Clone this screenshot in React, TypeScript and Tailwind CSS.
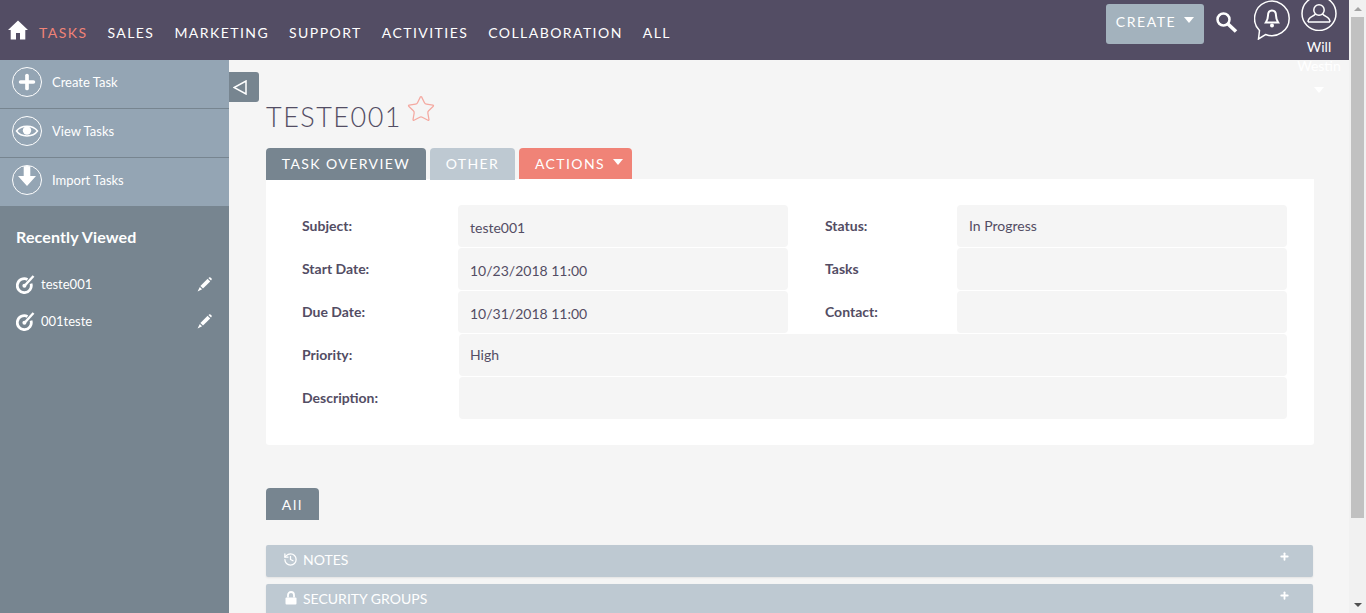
import { History, Plus, Star } from "lucide-react";

const nav = ["SALES", "MARKETING", "SUPPORT", "ACTIVITIES", "COLLABORATION", "ALL"];

const HomeIcon = () => (
  <svg width="20" height="20" viewBox="0 0 20 20" fill="white">
    <path d="M10 0.5 L20 10 L17.3 10 L17.3 19.5 L12 19.5 L12 13 L8 13 L8 19.5 L2.7 19.5 L2.7 10 L0 10 Z" />
  </svg>
);

const Caret = () => (
  <span className="inline-block w-0 h-0 border-l-[5.5px] border-r-[5.5px] border-t-[6px] border-l-transparent border-r-transparent border-t-white" />
);

const Circle = ({ children }: { children: React.ReactNode }) => (
  <span className="w-[30px] h-[30px] rounded-full border-[1.5px] border-white flex items-center justify-center overflow-hidden shrink-0">
    {children}
  </span>
);

const TaskIcon = () => (
  <svg width="19" height="19" viewBox="0 0 19 19" fill="none" stroke="white" className="shrink-0">
    <path d="M11.5 4.4 A7 7 0 1 0 15 8.6" strokeWidth="2.8" />
    <path d="M8.4 11 L17.5 1" strokeWidth="2.4" />
    <circle cx="8.4" cy="10.8" r="2" fill="white" stroke="none" />
  </svg>
);

const PencilIcon = () => (
  <svg width="15" height="15" viewBox="0 0 15 15" fill="white" className="ml-auto">
    <path d="M3.4 9 L10.6 1.8 L13.2 4.4 L6 11.6 Z" />
    <path d="M11.4 1 L12.2 0.4 C12.6 0.1 13 0.1 13.4 0.4 L14.6 1.6 C14.9 2 14.9 2.4 14.6 2.8 L14 3.6 Z" />
    <path d="M2.8 9.9 L5.1 12.2 L0.6 14.4 Z" />
  </svg>
);

const Field = ({
  label,
  value,
  wide,
  right,
  high,
}: {
  label: string;
  value?: string;
  wide?: boolean;
  right?: boolean;
  high?: boolean;
}) => (
  <>
    <div className={right ? "text-[14px] font-bold text-[#534d64] pt-[10px] pl-[37px]" : "text-[14px] font-bold text-[#534d64] pt-[10px]"}>
      {label}
    </div>
    <div
      className={
        wide
          ? "col-span-3 ml-px h-[42px] rounded-[4px] bg-[#f5f5f5] px-[11px] pt-[10px] text-[14px] text-[#534d64]"
          : high
            ? "h-[42px] rounded-[4px] bg-[#f5f5f5] px-[12px] pt-[10px] text-[14px] text-[#534d64]"
            : "h-[42px] rounded-[4px] bg-[#f5f5f5] px-[12px] pt-[12px] text-[14px] text-[#534d64]"
      }
    >
      {value}
    </div>
  </>
);

const SubPanel = ({ icon, title }: { icon: React.ReactNode; title: string }) => (
  <div className="h-[32px] bg-[#bec9d2] rounded-[2px] flex items-center pl-[17px] pr-[23px] pb-[4px] text-white text-[14px] shadow-[0_1px_2px_rgba(0,0,0,0.08)]">
    <span className="w-[15px] flex justify-center mr-[5px]">{icon}</span>
    <span>{title}</span>
    <Plus size={11} strokeWidth={4} className="ml-auto -mt-[6px]" />
  </div>
);

export default function App() {
  return (
    <div className="flex h-[613px] w-full overflow-hidden bg-[#f5f5f5] font-['Lato','Open_Sans',sans-serif]">
      <div className="flex-1 min-w-0 flex flex-col">
        {/* Top bar */}
        <header className="relative h-[60px] shrink-0 bg-[#534d64] flex items-center pl-[8px] pr-[13px] text-white">
          <HomeIcon />
          <nav className="ml-[11px] flex items-center gap-[20px] text-[14px] tracking-[1.44px] mt-[5px]">
            <span className="relative text-[#f08377]">
              TASKS
              <span className="absolute left-0 right-0 top-[-25px] h-[3px] bg-[#f08377]" />
            </span>
            {nav.map((n) => (
              <span key={n}>{n}</span>
            ))}
          </nav>
          <div className="ml-auto flex items-start h-full">
            <button className="mt-[4px] h-[40px] w-[98px] rounded-[3px] bg-[#a3b2bd] flex items-center justify-center gap-[8px] pb-[5px] text-[14px] tracking-[1.55px]">
              CREATE
              <span className="-mt-[4px] flex">
                <Caret />
              </span>
            </button>
            <svg width="22" height="22" viewBox="0 0 22 22" fill="none" stroke="white" className="ml-[12px] mt-[12px]">
              <circle cx="7.5" cy="7.5" r="6" strokeWidth="2.5" />
              <path d="M12 12 L20 19.5" strokeWidth="3.6" />
            </svg>
            <svg width="37" height="40" viewBox="0 0 37 40" fill="none" stroke="white" className="ml-[16px]">
              <path d="M5.5 30.5 A17.3 17.3 0 1 1 11.5 34.5 L4.5 39 Z" strokeWidth="1.5" />
              <path d="M18 10.5 C15 10.5 14 13 14 15.5 C14 19 13 20.5 11.8 22.5 L24.2 22.5 C23 20.5 22 19 22 15.5 C22 13 21 10.5 18 10.5 Z" strokeWidth="2" />
              <circle cx="18" cy="25.5" r="2" fill="white" stroke="none" />
            </svg>
            <div className="relative ml-[10px] w-[35px]">
              <svg width="36" height="36" viewBox="0 0 36 36" fill="none" stroke="white" className="-mt-[5px]">
                <circle cx="18" cy="18.5" r="17" strokeWidth="1.5" />
                <circle cx="18" cy="15" r="5.2" strokeWidth="1.5" />
                <path d="M7 27 C7 22 12 22 14.5 19 M29 27 C29 22 24 22 21.5 19 M7 27 L29 27" strokeWidth="1.5" />
              </svg>
              {/* user menu spills out of the bar */}
              <div className="absolute top-[37px] left-[-7px] w-[50px] text-center text-[14px] leading-[19px]">
                <div>Will</div>
                <div>Westin</div>
                <div className="mt-[12px] flex justify-center">
                  <Caret />
                </div>
              </div>
            </div>
          </div>
        </header>

        <div className="flex-1 min-h-0 flex">
          {/* Sidebar */}
          <aside className="w-[229px] shrink-0 bg-[#778590] text-white">
            {[
              { label: "Create Task", icon: <Plus size={22} strokeWidth={4} /> },
              {
                label: "View Tasks",
                icon: (
                  <svg width="24" height="16" viewBox="0 0 24 16" fill="none" stroke="white">
                    <path d="M1.5 8 C6 1.5 18 1.5 22.5 8 C18 14.5 6 14.5 1.5 8 Z" strokeWidth="1.5" />
                    <circle cx="12" cy="7.5" r="4.2" fill="white" stroke="none" />
                  </svg>
                ),
              },
              {
                label: "Import Tasks",
                icon: (
                  <svg width="20" height="24" viewBox="0 0 20 24" fill="white" className="-mt-[5px]">
                    <path d="M6.7 0 H13.3 V11 H19 L10 21 L1 11 H6.7 Z" />
                  </svg>
                ),
              },
            ].map((it) => (
              <div
                key={it.label}
                className="h-[49px] bg-[#94a5b4] border-b border-[#778590] flex items-center pl-[12px] gap-[10px] text-[13px] pb-[5px]"
              >
                <Circle>{it.icon}</Circle>
                <span className="pt-[2px]">{it.label}</span>
              </div>
            ))}
            <div className="pl-[16px] pr-[17px] pt-[20px]">
              <h3 className="text-[16px] font-bold leading-[19px] tracking-[0.13px]">Recently Viewed</h3>
              <ul className="mt-[20px] text-[13px]">
                {["teste001", "001teste"].map((t) => (
                  <li key={t} className="h-[37px] flex items-center gap-[6px]">
                    <TaskIcon />
                    <span>{t}</span>
                    <PencilIcon />
                  </li>
                ))}
              </ul>
            </div>
          </aside>

          {/* Main content */}
          <main className="relative flex-1 min-w-0 pl-[37px] pr-[35px] overflow-hidden">
            <button className="absolute left-0 top-[12px] w-[30px] h-[30px] bg-[#778590] rounded-r-[3px] flex items-center pl-[4px]">
              <svg width="14" height="15" viewBox="0 0 14 15" fill="none" stroke="white" strokeWidth="1.5">
                <path d="M13 1 V14 L1 7.5 Z" />
              </svg>
            </button>

            <div className="h-[58px] pt-[28px] flex items-start">
              <h2 className="text-[27px] font-light leading-[60px] tracking-[1.5px] text-[#534d64] -mt-[1px] h-[60px]">TESTE001</h2>
              <Star size={30} strokeWidth={1} className="text-[#f4a9a1] ml-[4px] mt-[6px]" />
            </div>

            <div className="relative z-10 mt-[30px] flex gap-[4px] text-[14px] tracking-[1.4px] text-white h-[32px]">
              <div className="h-[32px] w-[160px] pb-px bg-[#778590] rounded-t-[4px] flex items-center justify-center">TASK OVERVIEW</div>
              <div className="h-[32px] w-[85px] pb-px bg-[#bec9d2] rounded-t-[4px] flex items-center justify-center">OTHER</div>
              <div className="h-[31px] w-[113px] pl-[16px] bg-[#f08377] rounded-t-[4px] flex items-center gap-[8px]">
                ACTIONS
                <span className="-mt-[4px] flex">
                  <Caret />
                </span>
              </div>
            </div>

            <section className="-mt-px bg-white rounded-b-[3px] h-[266px] pl-[36px] pr-[27px] pt-[26px]">
              <div className="grid grid-cols-[156px_330px_169px_330px] gap-y-px">
                <Field label="Subject:" value="teste001" />
                <Field label="Status:" value="In Progress" right high />
                <Field label="Start Date:" value="10/23/2018 11:00" />
                <Field label="Tasks" right />
                <Field label="Due Date:" value="10/31/2018 11:00" />
                <Field label="Contact:" right />
                <Field label="Priority:" value="High" wide />
                <Field label="Description:" wide />
              </div>
            </section>

            <div className="mt-[43px] h-[32px] w-[53px] bg-[#778590] rounded-t-[4px] text-white text-[14px] tracking-[1.75px] flex items-center justify-center">All</div>

            <div className="mt-[25px] mr-px flex flex-col gap-[7px]">
              <SubPanel icon={<History size={15} strokeWidth={2} />} title="NOTES" />
              <SubPanel
                icon={
                  <svg width="12" height="14" viewBox="0 0 12 14" fill="white" stroke="white">
                    <path d="M3 6.5 V4 A3 3 0 0 1 9 4 V6.5" fill="none" strokeWidth="1.8" />
                    <rect x="0.5" y="6.5" width="11" height="7" rx="1" strokeWidth="0" />
                  </svg>
                }
                title="SECURITY GROUPS"
              />
            </div>
          </main>
        </div>
      </div>

      {/* Scrollbar */}
      <div className="w-[17px] shrink-0 bg-[#f1f1f1] flex flex-col items-center">
        <div className="h-[17px] flex items-center justify-center">
          <span className="w-0 h-0 border-l-[4px] border-r-[4px] border-b-[4px] border-l-transparent border-r-transparent border-b-[#a3a3a3]" />
        </div>
        <div className="w-[13px] h-[501px] bg-[#c1c1c1]" />
        <div className="mt-auto h-[17px] flex items-center justify-center">
          <span className="w-0 h-0 border-l-[4px] border-r-[4px] border-t-[4px] border-l-transparent border-r-transparent border-t-[#505050]" />
        </div>
      </div>
    </div>
  );
}
